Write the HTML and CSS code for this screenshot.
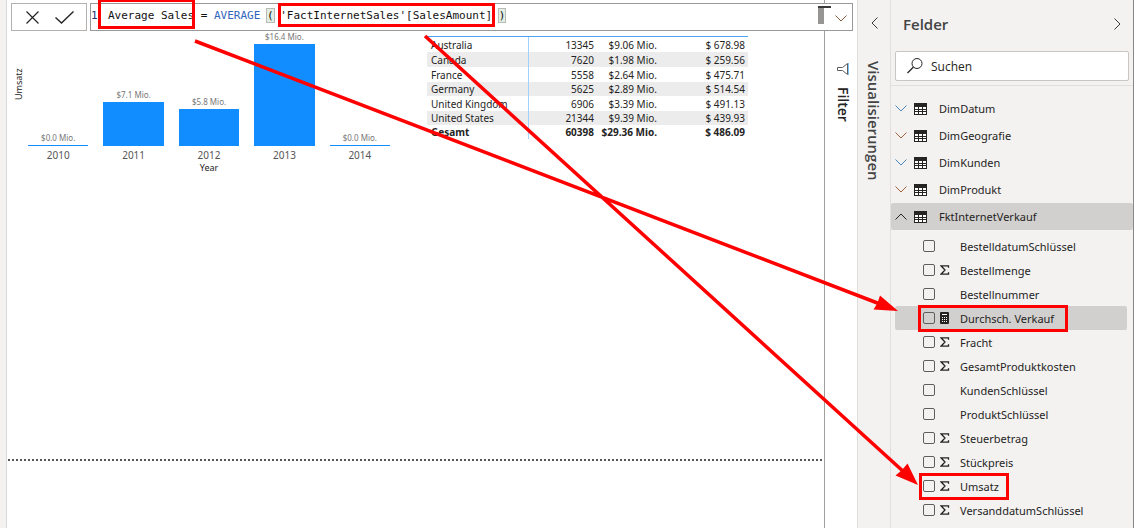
FILE: index.html
```html
<!DOCTYPE html>
<html lang="de">
<head>
<meta charset="utf-8">
<title>Average Sales</title>
<link rel="stylesheet" href="styles.css">
</head>
<body>
<svg class="defs" aria-hidden="true">
  <symbol id="down" viewBox="0 0 12 7"><path d="M.5 .5 6 6 11.5 .5" fill="none" stroke="currentColor"/></symbol>
  <symbol id="up" viewBox="0 0 12 7"><path d="M.5 6.5 6 1l5.500 5.500" fill="none" stroke="currentColor"/></symbol>
  <symbol id="table" viewBox="0 0 13 12"><path fill="#252423" d="M0 0h13v12H0z"/><path fill="#fff" d="M1 4h3v2H1zM5 4h3v2H5zM9 4h3v2H9zM1 7h3v1H1zM5 7h3v1H5zM9 7h3v1H9zM1 9h3v2H1zM5 9h3v2H5zM9 9h3v2H9z"/></symbol>
  <symbol id="sum" viewBox="0 0 10 10"><path d="M8.500 2.800V.8H1L5 5 1 9.200h7.500V7.200" fill="none" stroke="#252423" stroke-width="1.300"/></symbol>
  <symbol id="calc" viewBox="0 0 9 12"><rect width="9" height="12" rx="1" fill="#252423"/><path fill="#fff" d="M2 2h5v1H2zM2 5h1v1H2zM4 5h1v1H4zM6 5h1v1H6zM2 7h1v1H2zM4 7h1v1H4zM6 7h1v1H6zM2 9h1v1H2zM4 9h1v1H4zM6 9h1v1H6z"/></symbol>
</svg>
<div class="app">
  <div class="rail"></div>
  <div class="workspace">
    <main class="canvas">
      <div class="visuals">
        <figure class="chart">
          <div class="y-title">Umsatz</div>
          <div class="plot">
            <div class="columns">
              <div class="column"><span class="value">$0.0 Mio.</span><div class="bar" style="height:1px"></div></div>
              <div class="column"><span class="value">$7.1 Mio.</span><div class="bar" style="height:44px"></div></div>
              <div class="column"><span class="value">$5.8 Mio.</span><div class="bar" style="height:37px"></div></div>
              <div class="column"><span class="value">$16.4 Mio.</span><div class="bar" style="height:102px"></div></div>
              <div class="column"><span class="value">$0.0 Mio.</span><div class="bar" style="height:1px"></div></div>
            </div>
            <div class="years"><span>2010</span><span>2011</span><span>2012</span><span>2013</span><span>2014</span></div>
            <figcaption class="x-title">Year</figcaption>
          </div>
        </figure>
        <table class="matrix">
          <colgroup><col class="c-country"><col class="c-count"><col class="c-total"><col class="c-avg"></colgroup>
          <tbody>
            <tr><th scope="row">Australia</th><td>13345</td><td>$9.06 Mio.</td><td>$ 678.98</td></tr>
            <tr><th scope="row">Canada</th><td>7620</td><td>$1.98 Mio.</td><td>$ 259.56</td></tr>
            <tr><th scope="row">France</th><td>5558</td><td>$2.64 Mio.</td><td>$ 475.71</td></tr>
            <tr><th scope="row">Germany</th><td>5625</td><td>$2.89 Mio.</td><td>$ 514.54</td></tr>
            <tr><th scope="row">United Kingdom</th><td>6906</td><td>$3.39 Mio.</td><td>$ 491.13</td></tr>
            <tr><th scope="row">United States</th><td>21344</td><td>$9.39 Mio.</td><td>$ 439.93</td></tr>
          </tbody>
          <tfoot><tr><th scope="row">Gesamt</th><td>60398</td><td>$29.36 Mio.</td><td>$ 486.09</td></tr></tfoot>
        </table>
      </div>
      <div class="page-edge"></div>
    </main>
    <aside class="filter-pane">
      <svg width="12" height="12" viewBox="0 0 12 12" aria-hidden="true"><path d="M10.500 .5v11L5.500 7.500H.5v-3h5z" fill="none" stroke="#605e5c"/><path d="M11.500 0v12" stroke="#7cc4f5"/></svg>
      <h2 class="filter-title">Filter</h2>
    </aside>
    <div class="formula">
      <div class="formula-actions">
        <button type="button" aria-label="Abbrechen"><svg width="13" height="13" viewBox="0 0 13 13"><path d="m.5 .5 12 12m0-12-12 12" stroke="#252423" stroke-width="1.200"/></svg></button>
        <button type="button" aria-label="Übernehmen"><svg width="19" height="13" viewBox="0 0 19 13"><path d="m.5 6.500 6 5.500L18.500 .5" fill="none" stroke="#252423" stroke-width="1.400"/></svg></button>
      </div>
      <div class="editor">
        <span class="line-number">1</span>
        <div class="code" role="textbox" contenteditable="true" aria-label="Formel" spellcheck="false">Average Sales = <span class="fn">AVERAGE</span> <span class="paren">(</span> 'FactInternetSales'[SalesAmount] <span class="paren">)</span></div>
        <svg class="scroll-mark" width="13" height="18" viewBox="0 0 13 18" aria-hidden="true"><path fill="#979593" d="M0 2h6v16H0z"/><path fill="#3b3a39" d="M0 0h13v2H0z"/></svg>
        <button type="button" class="expand" aria-label="Erweitern"><svg width="12" height="7"><use href="#down"/></svg></button>
      </div>
    </div>
  </div>
  <aside class="vis-pane">
    <button type="button" aria-label="Visualisierungen öffnen"><svg width="7" height="12" viewBox="0 0 7 12"><path d="M6.500 .5 1 6l5.500 5.500" fill="none" stroke="#3b3a39"/></svg></button>
    <h2 class="vis-title">Visualisierungen</h2>
  </aside>
  <aside class="fields">
    <header class="fields-head">
      <h2>Felder</h2>
      <button type="button" aria-label="Felder schließen"><svg width="7" height="12" viewBox="0 0 7 12"><path d="M.5 .5 6 6 .5 11.500" fill="none" stroke="#3b3a39"/></svg></button>
    </header>
    <div class="search-wrap">
      <label class="search">
        <svg width="16" height="16" viewBox="0 0 16 16" aria-hidden="true"><circle cx="10" cy="5.500" r="5" fill="none" stroke="#252423"/><path d="M6.500 9 .5 15" stroke="#252423" stroke-width="1.200"/></svg>
        <input type="text" placeholder="Suchen" aria-label="Suchen">
      </label>
    </div>
    <div class="tables">
      <button type="button" class="tbl cool"><svg width="12" height="7"><use href="#down"/></svg><svg width="13" height="12"><use href="#table"/></svg><span>DimDatum</span></button>
      <button type="button" class="tbl warm"><svg width="12" height="7"><use href="#down"/></svg><svg width="13" height="12"><use href="#table"/></svg><span>DimGeografie</span></button>
      <button type="button" class="tbl cool"><svg width="12" height="7"><use href="#down"/></svg><svg width="13" height="12"><use href="#table"/></svg><span>DimKunden</span></button>
      <button type="button" class="tbl warm"><svg width="12" height="7"><use href="#down"/></svg><svg width="13" height="12"><use href="#table"/></svg><span>DimProdukt</span></button>
      <button type="button" class="tbl open" aria-expanded="true"><svg width="12" height="7"><use href="#up"/></svg><svg width="13" height="12"><use href="#table"/></svg><span>FktInternetVerkauf</span></button>
    </div>
    <div class="columns-list">
      <label class="field"><input type="checkbox"><span class="kind"></span><span>BestelldatumSchlüssel</span></label>
      <label class="field"><input type="checkbox"><span class="kind"><svg width="10" height="10"><use href="#sum"/></svg></span><span>Bestellmenge</span></label>
      <label class="field"><input type="checkbox"><span class="kind"></span><span>Bestellnummer</span></label>
      <label class="field active"><input type="checkbox"><span class="kind"><svg width="9" height="12"><use href="#calc"/></svg></span><span>Durchsch. Verkauf</span></label>
      <label class="field"><input type="checkbox"><span class="kind"><svg width="10" height="10"><use href="#sum"/></svg></span><span>Fracht</span></label>
      <label class="field"><input type="checkbox"><span class="kind"><svg width="10" height="10"><use href="#sum"/></svg></span><span>GesamtProduktkosten</span></label>
      <label class="field"><input type="checkbox"><span class="kind"></span><span>KundenSchlüssel</span></label>
      <label class="field"><input type="checkbox"><span class="kind"></span><span>ProduktSchlüssel</span></label>
      <label class="field"><input type="checkbox"><span class="kind"><svg width="10" height="10"><use href="#sum"/></svg></span><span>Steuerbetrag</span></label>
      <label class="field"><input type="checkbox"><span class="kind"><svg width="10" height="10"><use href="#sum"/></svg></span><span>Stückpreis</span></label>
      <label class="field"><input type="checkbox"><span class="kind"><svg width="10" height="10"><use href="#sum"/></svg></span><span>Umsatz</span></label>
      <label class="field"><input type="checkbox"><span class="kind"><svg width="10" height="10"><use href="#sum"/></svg></span><span>VersanddatumSchlüssel</span></label>
    </div>
  </aside>
</div>
<svg class="annotations" width="1134" height="528" viewBox="0 0 1134 528" aria-hidden="true">
  <g fill="none" stroke="#f00" stroke-width="3">
    <path d="M99.500 .5h94v27h-94zM279.500 4.500h214v21h-214zM919.500 306.500h147v24h-147zM920.500 474.500h87v24h-87z"/>
    <path d="M195 41 880 304M425 36 905 473" stroke-width="3.500"/>
  </g>
  <path fill="#f00" d="M898 311 880 295.500 877.500 303 873.500 309.500zM918 485 907.500 463.500 902 470 895.500 475.500z"/>
</svg>
</body>
</html>
```
FILE: styles.css
```css
* { box-sizing: border-box; }
body {
  margin: 0;
  overflow: hidden;
  background: #fff;
  color: #252423;
  font-family: "Open Sans", "Noto Sans", sans-serif;
  font-size: 12px;
}
svg { display: block; flex: none; }
h2, figure { margin: 0; }
button {
  padding: 0;
  border: 0;
  background: none;
  color: inherit;
  font: inherit;
}
.defs { display: none; }

.app {
  display: grid;
  grid-template-columns: 7px 1fr 34px 243px;
  min-height: 100vh;
}
.rail { background: #f3f2f1; border-right: 1px solid #d8dadc; }
.workspace {
  position: relative;
  display: grid;
  grid-template-columns: 1fr 33px;
}

/* report page */
.canvas { min-width: 0; font-family: "Noto Sans", "Open Sans", sans-serif; }
.visuals {
  display: flex;
  align-items: flex-start;
  min-height: 459px;
}
.chart {
  display: flex;
  width: 383px;
  padding-top: 32px;
  margin-right: 37px;
}
.y-title {
  width: 21px;
  padding: 0 6px 0 3px;
  height: 104px;
  writing-mode: vertical-rl;
  transform: rotate(180deg);
  text-align: center;
  font-size: 9px;
  line-height: 12px;
}
.plot { flex: 1; }
.columns {
  display: flex;
  gap: 15px;
  height: 114px;
}
.column {
  flex: 1;
  display: flex;
  flex-direction: column;
  justify-content: flex-end;
}
.value {
  text-align: center;
  font-size: 8px;
  line-height: 12px;
  color: #777;
  padding-bottom: 1px;
  white-space: nowrap;
}
.bar { background: #118dff; flex: none; }
.years { display: flex; gap: 15px; margin-top: 2px; }
.years span {
  flex: 1;
  text-align: center;
  font-size: 10px;
  line-height: 14px;
  color: #555;
}
.x-title { text-align: center; font-size: 9px; line-height: 12px; }

.matrix {
  width: 321px;
  margin-top: 36px;
  table-layout: fixed;
  border-collapse: separate;
  border-spacing: 0;
  border-top: 1px solid #4ba3f0;
  font-size: 10px;
  line-height: 14px;
}
.c-country { width: 102px; }
.c-count { width: 68px; }
.c-total { width: 63px; }
.c-avg { width: 88px; }
.matrix th, .matrix td { padding: 0 3px 0 0; text-align: right; white-space: nowrap; }
.matrix th {
  padding: 0 0 0 4px;
  text-align: left;
  font-weight: 400;
  border-right: 1px solid #a0d1ff;
}
.matrix tbody tr { height: 15px; }
.matrix tbody tr:nth-child(even) { background: #ececec; }
.matrix tbody tr:nth-child(even) { height: 14px; }
.matrix tbody tr:nth-child(2) { height: 15px; }
.matrix tfoot th, .matrix tfoot td { font-weight: 700; }

.page-edge {
  height: 2px;
  margin-left: 1px;
  background: repeating-linear-gradient(90deg, #555 0 2px, transparent 2px 4px);
}

/* formula bar over the report page */
.formula {
  position: absolute;
  top: 3px;
  left: 4px;
  right: 4px;
  display: flex;
  gap: 3px;
  height: 28px;
}
.formula-actions {
  display: flex;
  align-items: center;
  gap: 16px;
  padding: 0 12px 0 14px;
  border: 1px solid #b3b0ad;
  background: #fff;
}
.editor {
  flex: 1;
  display: flex;
  align-items: center;
  border: 1px solid #999;
  background: #fff;
  font: 11px/16px "DejaVu Sans Mono", "Liberation Mono", monospace;
  color: #111;
}
.line-number { width: 17px; color: #237; padding-bottom: 3px; }
.code { flex: 1; outline: 0; white-space: pre; padding-bottom: 3px; }
.fn { color: #3165bb; }
.paren { background: #e3eee3; outline: 1px solid #b9b9b9; }
.scroll-mark { align-self: flex-start; margin-top: 2px; }
.expand { margin: 2px 5px 0 4px; color: #8a5a3c; }

/* collapsed panes */
.filter-pane {
  display: flex;
  flex-direction: column;
  align-items: center;
  gap: 12px;
  padding: 63px 0 0 3px;
  border-left: 1px solid #a19f9d;
}
.filter-title, .vis-title { writing-mode: vertical-rl; white-space: nowrap; }
.filter-title { font-size: 14px; line-height: 20px; font-weight: 600; }
.vis-pane {
  display: flex;
  flex-direction: column;
  align-items: center;
  gap: 32px;
  padding-top: 17px;
  background: #f3f2f1;
  border: solid #e1dfdd;
  border-width: 0 1px;
}
.vis-title { font-size: 15px; line-height: 20px; font-weight: 600; color: #444; }

/* field list */
.fields { background: #f3f2f1; border-right: 1px solid #888; }
.fields-head {
  display: flex;
  align-items: center;
  justify-content: space-between;
  height: 47px;
  padding: 0 12px;
}
.fields-head h2 { font-size: 15px; line-height: 20px; font-weight: 600; color: #444; }
.search-wrap { padding: 4px 4px; border-bottom: 1px solid #e1dfdd; }
.search {
  display: flex;
  align-items: center;
  gap: 8px;
  height: 30px;
  padding: 0 11px;
  border: 1px solid #c8c6c4;
  border-radius: 2px;
  background: #fff;
}
.search input {
  flex: 1;
  min-width: 0;
  padding: 0;
  border: 0;
  outline: 0;
  background: none;
  font: inherit;
}
.search input::placeholder { color: #252423; opacity: 1; }
.tables, .columns-list { font-family: "Noto Sans", "Open Sans", sans-serif; font-size: 11px; }
.tables { padding-top: 9px; }
.tbl {
  display: flex;
  align-items: center;
  width: 100%;
  height: 27px;
  padding: 0 4px;
}
.tbl svg:nth-child(2) { margin: 0 12px 0 7px; }
.tbl span { padding-bottom: 1px; }
.cool { color: #4a86b8; }
.warm { color: #a0623c; }
.tbl span { color: #252423; }
.open { background: #d2d0ce; border-radius: 2px; }
.columns-list { padding: 4px 6px 4px 4px; }
.field {
  display: flex;
  align-items: center;
  height: 24px;
  padding-left: 28px;
  border-radius: 2px;
}
.field input {
  appearance: none;
  width: 12px;
  height: 12px;
  margin: 0 5px 0 0;
  border: 1px solid #605e5c;
  border-radius: 2px;
}
.kind { width: 20px; }
.active { background: #d2d0ce; }

.annotations { position: absolute; top: 0; left: 0; pointer-events: none; }
```
